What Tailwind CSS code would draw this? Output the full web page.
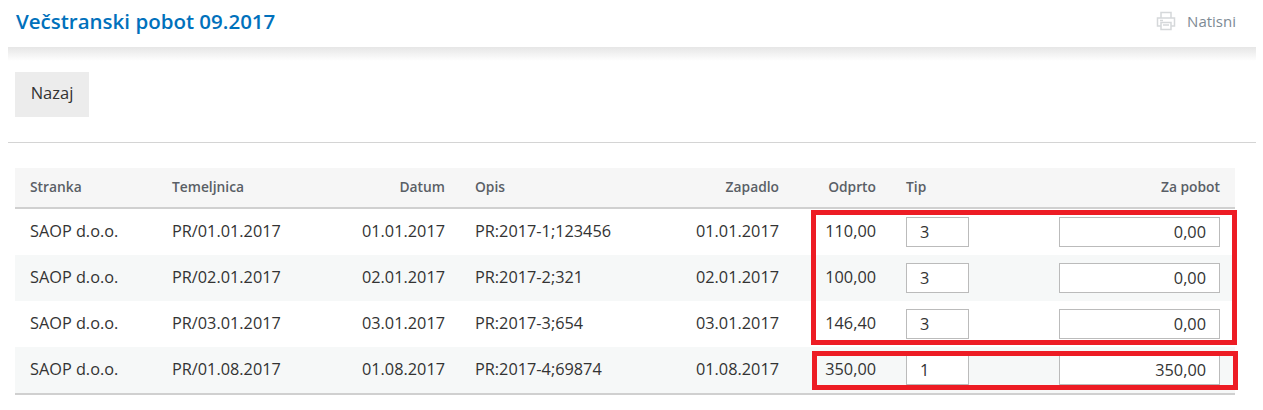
<!DOCTYPE html>
<html lang="sl">
<head>
    <meta charset="UTF-8">
    <meta name="viewport" content="width=device-width, initial-scale=1.0">
    <title>Večstranski pobot 09.2017</title>
    <script src="https://cdn.jsdelivr.net/npm/@tailwindcss/browser@4"></script>
</head>
<body class="bg-white font-['Open_Sans',sans-serif] text-[#333] overflow-hidden">
    <div class="relative w-[1263px] h-[410px]">

        <!-- Glava -->
        <header class="mx-2 w-[1248px] h-[47px] pl-2 pr-5 flex justify-between items-center pb-[5px]">
            <h1 class="text-[20.5px] leading-[26px] font-semibold text-[#0071bc]">Večstranski pobot 09.2017</h1>
            <a class="flex items-center gap-[11px] text-[15px] text-[#7d8a94]">
                <svg width="20" height="20" viewBox="0 0 20 20" fill="none" stroke="#d5d8da" stroke-width="1.500">
                    <path d="M5 7V1.500h10V7"/>
                    <path d="M5 15H1.500V7h17v8H15"/>
                    <path d="M5 11.500h10v7H5z"/>
                    <path d="M7 14h6M4 9.500h3"/>
                </svg>
                <span>Natisni</span>
            </a>
        </header>
        <div class="mx-2 w-[1248px] h-[14px] bg-linear-to-b from-[#e6e6e6] to-white"></div>

        <div class="pl-[15px] pt-[11px]">
            <button class="w-[74px] h-[45px] pb-[2px] bg-[#ececec] text-[16.500px] text-[#333]">Nazaj</button>
        </div>

        <hr class="mx-2 w-[1248px] mt-[25px] border-t border-[#d4d4d4]">

        <!-- Tabela -->
        <table class="ml-[15px] mt-[25px] w-[1220px] table-fixed border-separate border-spacing-0 text-[16.300px]">
            <colgroup>
                <col class="w-[142px]"><col class="w-[150px]"><col class="w-[153px]"><col class="w-[181px]">
                <col class="w-[153px]"><col class="w-[97px]"><col class="w-[153px]"><col class="w-[191px]">
            </colgroup>
            <thead>
                <tr class="h-[41px] bg-[#f6f6f6] text-[13.800px] text-[#5a5f66]">
                    <th class="px-[15px] border-b-2 border-[#d0d0d0] text-left font-semibold">Stranka</th>
                    <th class="px-[15px] border-b-2 border-[#d0d0d0] text-left font-semibold">Temeljnica</th>
                    <th class="px-[15px] border-b-2 border-[#d0d0d0] text-right font-semibold">Datum</th>
                    <th class="px-[15px] border-b-2 border-[#d0d0d0] text-left font-semibold">Opis</th>
                    <th class="px-[15px] border-b-2 border-[#d0d0d0] text-right font-semibold">Zapadlo</th>
                    <th class="px-[15px] border-b-2 border-[#d0d0d0] text-right font-semibold">Odprto</th>
                    <th class="px-[15px] border-b-2 border-[#d0d0d0] text-left font-semibold">Tip</th>
                    <th class="px-[15px] border-b-2 border-[#d0d0d0] text-right font-semibold">Za pobot</th>
                </tr>
            </thead>
            <tbody>
                <tr class="h-[46px]">
                    <td class="px-[15px] pb-[2px]">SAOP d.o.o.</td>
                    <td class="px-[15px] pb-[2px]">PR/01.01.2017</td>
                    <td class="px-[15px] pb-[2px] text-right">01.01.2017</td>
                    <td class="px-[15px] pb-[2px]">PR:2017-1;123456</td>
                    <td class="px-[15px] pb-[2px] text-right">01.01.2017</td>
                    <td class="px-[15px] pb-[2px] text-right">110,00</td>
                    <td class="px-[15px]"><input value="3" class="block w-[63px] h-[30px] px-[13px] border border-[#bbb] bg-white"></td>
                    <td class="px-[15px]"><input value="0,00" class="block ml-auto w-[161px] h-[30px] px-[13px] border border-[#bbb] bg-white text-right"></td>
                </tr>
                <tr class="h-[46px] bg-[#f6f8f8]">
                    <td class="px-[15px] pb-[2px]">SAOP d.o.o.</td>
                    <td class="px-[15px] pb-[2px]">PR/02.01.2017</td>
                    <td class="px-[15px] pb-[2px] text-right">02.01.2017</td>
                    <td class="px-[15px] pb-[2px]">PR:2017-2;321</td>
                    <td class="px-[15px] pb-[2px] text-right">02.01.2017</td>
                    <td class="px-[15px] pb-[2px] text-right">100,00</td>
                    <td class="px-[15px]"><input value="3" class="block w-[63px] h-[30px] px-[13px] border border-[#bbb] bg-white"></td>
                    <td class="px-[15px]"><input value="0,00" class="block ml-auto w-[161px] h-[30px] px-[13px] border border-[#bbb] bg-white text-right"></td>
                </tr>
                <tr class="h-[46px]">
                    <td class="px-[15px] pb-[2px]">SAOP d.o.o.</td>
                    <td class="px-[15px] pb-[2px]">PR/03.01.2017</td>
                    <td class="px-[15px] pb-[2px] text-right">03.01.2017</td>
                    <td class="px-[15px] pb-[2px]">PR:2017-3;654</td>
                    <td class="px-[15px] pb-[2px] text-right">03.01.2017</td>
                    <td class="px-[15px] pb-[2px] text-right">146,40</td>
                    <td class="px-[15px]"><input value="3" class="block w-[63px] h-[30px] px-[13px] border border-[#bbb] bg-white"></td>
                    <td class="px-[15px]"><input value="0,00" class="block ml-auto w-[161px] h-[30px] px-[13px] border border-[#bbb] bg-white text-right"></td>
                </tr>
                <tr class="h-[48px] bg-[#f6f8f8]">
                    <td class="px-[15px] pb-[2px] border-b-2 border-[#d0d0d0]">SAOP d.o.o.</td>
                    <td class="px-[15px] pb-[2px] border-b-2 border-[#d0d0d0]">PR/01.08.2017</td>
                    <td class="px-[15px] pb-[2px] border-b-2 border-[#d0d0d0] text-right">01.08.2017</td>
                    <td class="px-[15px] pb-[2px] border-b-2 border-[#d0d0d0]">PR:2017-4;69874</td>
                    <td class="px-[15px] pb-[2px] border-b-2 border-[#d0d0d0] text-right">01.08.2017</td>
                    <td class="px-[15px] pb-[2px] border-b-2 border-[#d0d0d0] text-right">350,00</td>
                    <td class="px-[15px] border-b-2 border-[#d0d0d0]"><input value="1" class="block w-[63px] h-[30px] px-[13px] border border-[#bbb] bg-white"></td>
                    <td class="px-[15px] border-b-2 border-[#d0d0d0]"><input value="350,00" class="block ml-auto w-[161px] h-[30px] px-[13px] border border-[#bbb] bg-white text-right"></td>
                </tr>
            </tbody>
        </table>

        <!-- Rdeči okvirji -->
        <div class="absolute left-[811px] top-[210px] w-[426px] h-[135px] border-[5px] border-[#ed1c24]"></div>
        <div class="absolute left-[812px] top-[351px] w-[426px] h-[39px] border-[5px] border-[#ed1c24]"></div>
    </div>
</body>
</html>
